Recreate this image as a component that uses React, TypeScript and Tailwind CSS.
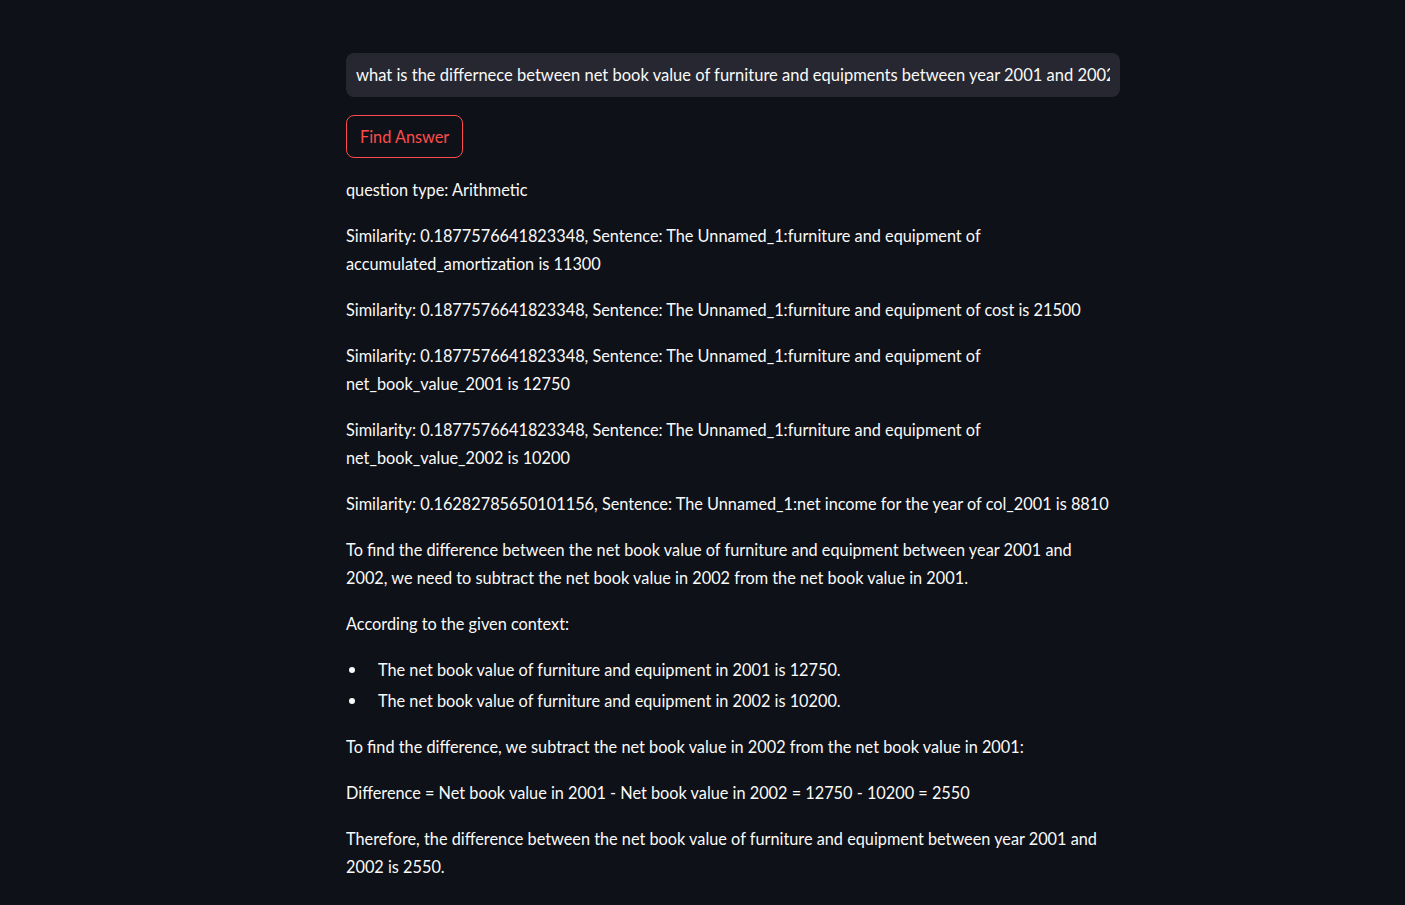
export default function App() {
  const paras1 = [
    "question type: Arithmetic",
    "Similarity: 0.1877576641823348, Sentence: The Unnamed_1:furniture and equipment of accumulated_amortization is 11300",
    "Similarity: 0.1877576641823348, Sentence: The Unnamed_1:furniture and equipment of cost is 21500",
    "Similarity: 0.1877576641823348, Sentence: The Unnamed_1:furniture and equipment of net_book_value_2001 is 12750",
    "Similarity: 0.1877576641823348, Sentence: The Unnamed_1:furniture and equipment of net_book_value_2002 is 10200",
    "Similarity: 0.16282785650101156, Sentence: The Unnamed_1:net income for the year of col_2001 is 8810",
    "To find the difference between the net book value of furniture and equipment between year 2001 and 2002, we need to subtract the net book value in 2002 from the net book value in 2001.",
    "According to the given context:",
  ];
  const items = [
    "The net book value of furniture and equipment in 2001 is 12750.",
    "The net book value of furniture and equipment in 2002 is 10200.",
  ];
  const paras2 = [
    "To find the difference, we subtract the net book value in 2002 from the net book value in 2001:",
    "Difference = Net book value in 2001 - Net book value in 2002 = 12750 - 10200 = 2550",
    "Therefore, the difference between the net book value of furniture and equipment between year 2001 and 2002 is 2550.",
  ];
  return (
    <div className="bg-[#0e1117] text-[#fafafa] min-h-screen font-['Lato',sans-serif] text-[16.3px] leading-[28px]">
      <div className="ml-[346px] w-[774px] pt-[53px] pb-10 flex flex-col gap-[18px]">
        <input
          readOnly
          value="what is the differnece between net book value of furniture and equipments between year 2001 and 2002"
          className="h-[44px] w-full rounded-[8px] bg-[#262730] px-[10px] text-[#fafafa] outline-none font-['Lato',sans-serif] text-[16.5px]"
        />
        <div>
          <button className="h-[43px] rounded-[8px] border border-[#ff4b4b] px-[13px] text-[#ff4b4b] font-['Lato',sans-serif] text-[16.3px]">
            Find Answer
          </button>
        </div>
        {paras1.map((p, i) => (
          <p key={i} className="max-w-[768px]">{p}</p>
        ))}
        <ul className="flex flex-col gap-[3px]">
          {items.map((t, i) => (
            <li key={i} className="flex items-center">
              <span className="w-[32px] flex">
                <span className="ml-[3px] h-[6px] w-[6px] rounded-full bg-[#fafafa]" />
              </span>
              <span>{t}</span>
            </li>
          ))}
        </ul>
        {paras2.map((p, i) => (
          <p key={i} className="max-w-[768px]">{p}</p>
        ))}
      </div>
    </div>
  );
}
